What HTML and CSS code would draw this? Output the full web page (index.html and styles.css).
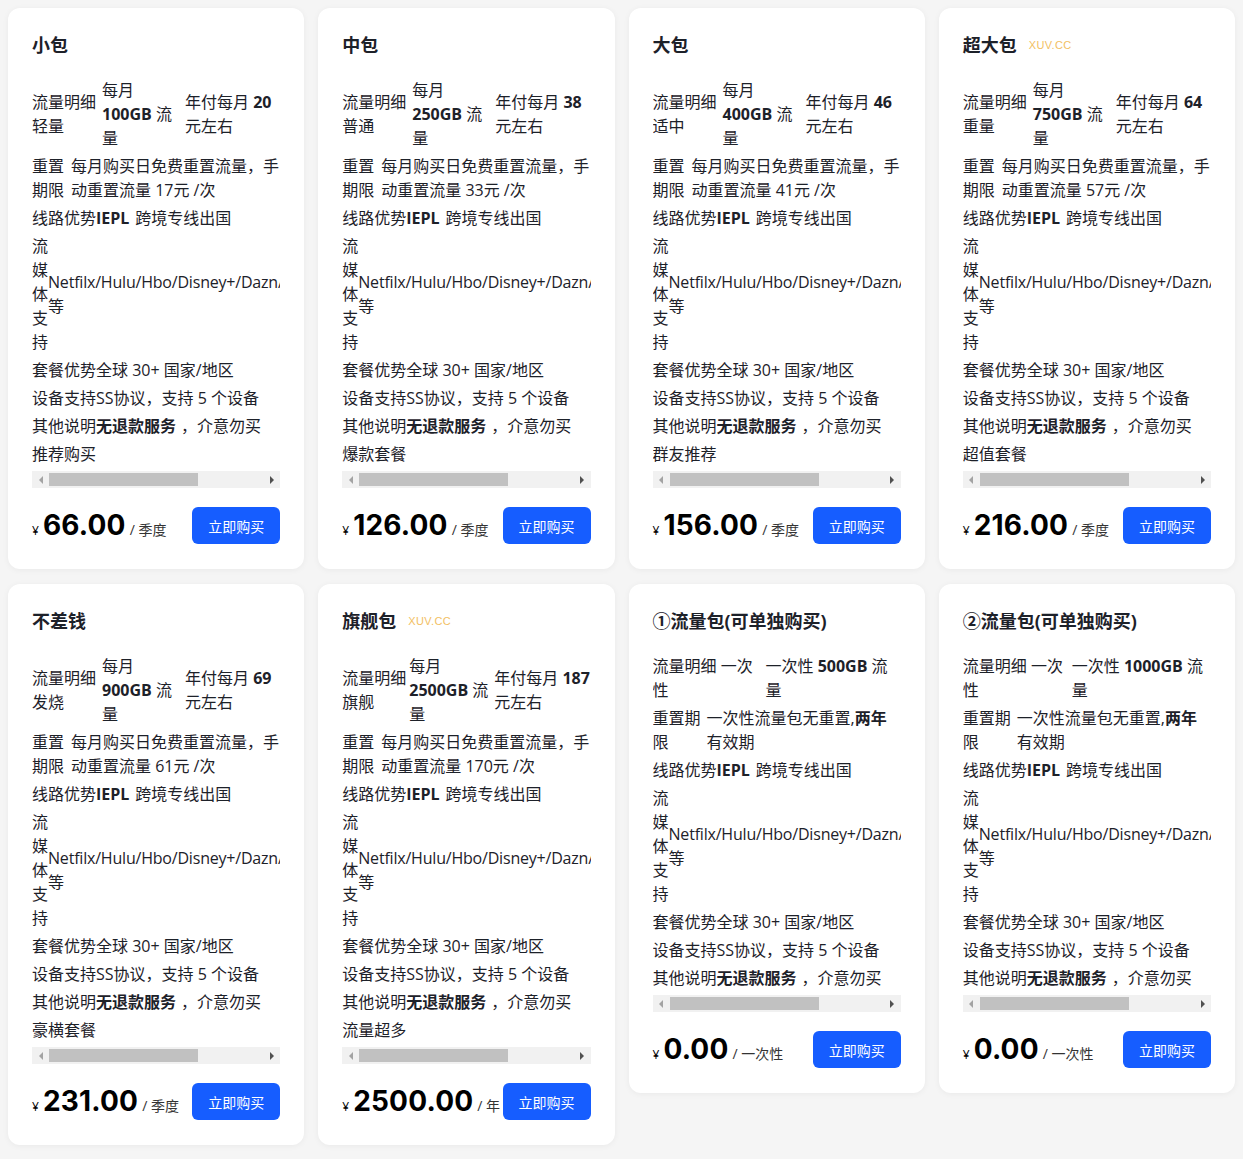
FILE: index.html
```html
<!DOCTYPE html>
<html lang="zh-CN">
<head>
<meta charset="utf-8">
<title>套餐</title>
<link rel="stylesheet" href="styles.css">
</head>
<body>
<div class="plans">

  <div class="card">
    <div class="card-head"><span class="card-title">小包</span></div>
    <div class="spec">
      <div class="row row-3">
        <div class="c-lab">流量明细 轻量</div>
        <div class="c-val">每月 <span class="nw"><b>100GB</b> 流</span>量</div>
        <div class="c-note"><span class="nw">年付每月 <b>20</b></span> 元左右</div>
      </div>
      <div class="row row-2">
        <div class="c-lab">重置期限</div>
        <div class="c-val">每月购买日免费重置流量，手动重置流量 17元 /次</div>
      </div>
      <div class="row">线路优势<b class="sp">IEPL</b>跨境专线出国</div>
      <div class="row row-stream">
        <div class="c-lab">流媒体支持</div>
        <div class="c-val"><span class="nw media">Netfilx/Hulu/Hbo/Disney+/Dazn/</span>等</div>
      </div>
      <div class="row">套餐优势全球 30+ 国家/地区</div>
      <div class="row">设备支持SS协议，支持 5 个设备</div>
      <div class="row">其他说明<b>无退款服务</b><span class="cm">，</span>介意勿买</div>
      <div class="row">推荐购买</div>
    </div>
    <div class="hscroll"><span class="sb-btn sb-left"></span><span class="sb-thumb"></span><span class="sb-btn sb-right"></span></div>
    <div class="buy">
      <div class="price"><span class="cur">¥</span><span class="amount">66.00</span><span class="unit">/ 季度</span></div>
      <button class="btn">立即购买</button>
    </div>
  </div>

  <div class="card">
    <div class="card-head"><span class="card-title">中包</span></div>
    <div class="spec">
      <div class="row row-3">
        <div class="c-lab">流量明细 普通</div>
        <div class="c-val">每月 <span class="nw"><b>250GB</b> 流</span>量</div>
        <div class="c-note"><span class="nw">年付每月 <b>38</b></span> 元左右</div>
      </div>
      <div class="row row-2">
        <div class="c-lab">重置期限</div>
        <div class="c-val">每月购买日免费重置流量，手动重置流量 33元 /次</div>
      </div>
      <div class="row">线路优势<b class="sp">IEPL</b>跨境专线出国</div>
      <div class="row row-stream">
        <div class="c-lab">流媒体支持</div>
        <div class="c-val"><span class="nw media">Netfilx/Hulu/Hbo/Disney+/Dazn/</span>等</div>
      </div>
      <div class="row">套餐优势全球 30+ 国家/地区</div>
      <div class="row">设备支持SS协议，支持 5 个设备</div>
      <div class="row">其他说明<b>无退款服务</b><span class="cm">，</span>介意勿买</div>
      <div class="row">爆款套餐</div>
    </div>
    <div class="hscroll"><span class="sb-btn sb-left"></span><span class="sb-thumb"></span><span class="sb-btn sb-right"></span></div>
    <div class="buy">
      <div class="price"><span class="cur">¥</span><span class="amount">126.00</span><span class="unit">/ 季度</span></div>
      <button class="btn">立即购买</button>
    </div>
  </div>

  <div class="card">
    <div class="card-head"><span class="card-title">大包</span></div>
    <div class="spec">
      <div class="row row-3">
        <div class="c-lab">流量明细 适中</div>
        <div class="c-val">每月 <span class="nw"><b>400GB</b> 流</span>量</div>
        <div class="c-note"><span class="nw">年付每月 <b>46</b></span> 元左右</div>
      </div>
      <div class="row row-2">
        <div class="c-lab">重置期限</div>
        <div class="c-val">每月购买日免费重置流量，手动重置流量 41元 /次</div>
      </div>
      <div class="row">线路优势<b class="sp">IEPL</b>跨境专线出国</div>
      <div class="row row-stream">
        <div class="c-lab">流媒体支持</div>
        <div class="c-val"><span class="nw media">Netfilx/Hulu/Hbo/Disney+/Dazn/</span>等</div>
      </div>
      <div class="row">套餐优势全球 30+ 国家/地区</div>
      <div class="row">设备支持SS协议，支持 5 个设备</div>
      <div class="row">其他说明<b>无退款服务</b><span class="cm">，</span>介意勿买</div>
      <div class="row">群友推荐</div>
    </div>
    <div class="hscroll"><span class="sb-btn sb-left"></span><span class="sb-thumb"></span><span class="sb-btn sb-right"></span></div>
    <div class="buy">
      <div class="price"><span class="cur">¥</span><span class="amount">156.00</span><span class="unit">/ 季度</span></div>
      <button class="btn">立即购买</button>
    </div>
  </div>

  <div class="card">
    <div class="card-head"><span class="card-title">超大包</span><span class="tag">xuv.cc</span></div>
    <div class="spec">
      <div class="row row-3">
        <div class="c-lab">流量明细 重量</div>
        <div class="c-val">每月 <span class="nw"><b>750GB</b> 流</span>量</div>
        <div class="c-note"><span class="nw">年付每月 <b>64</b></span> 元左右</div>
      </div>
      <div class="row row-2">
        <div class="c-lab">重置期限</div>
        <div class="c-val">每月购买日免费重置流量，手动重置流量 57元 /次</div>
      </div>
      <div class="row">线路优势<b class="sp">IEPL</b>跨境专线出国</div>
      <div class="row row-stream">
        <div class="c-lab">流媒体支持</div>
        <div class="c-val"><span class="nw media">Netfilx/Hulu/Hbo/Disney+/Dazn/</span>等</div>
      </div>
      <div class="row">套餐优势全球 30+ 国家/地区</div>
      <div class="row">设备支持SS协议，支持 5 个设备</div>
      <div class="row">其他说明<b>无退款服务</b><span class="cm">，</span>介意勿买</div>
      <div class="row">超值套餐</div>
    </div>
    <div class="hscroll"><span class="sb-btn sb-left"></span><span class="sb-thumb"></span><span class="sb-btn sb-right"></span></div>
    <div class="buy">
      <div class="price"><span class="cur">¥</span><span class="amount">216.00</span><span class="unit">/ 季度</span></div>
      <button class="btn">立即购买</button>
    </div>
  </div>

  <div class="card">
    <div class="card-head"><span class="card-title">不差钱</span></div>
    <div class="spec">
      <div class="row row-3">
        <div class="c-lab">流量明细 发烧</div>
        <div class="c-val">每月 <span class="nw"><b>900GB</b> 流</span>量</div>
        <div class="c-note"><span class="nw">年付每月 <b>69</b></span> 元左右</div>
      </div>
      <div class="row row-2">
        <div class="c-lab">重置期限</div>
        <div class="c-val">每月购买日免费重置流量，手动重置流量 61元 /次</div>
      </div>
      <div class="row">线路优势<b class="sp">IEPL</b>跨境专线出国</div>
      <div class="row row-stream">
        <div class="c-lab">流媒体支持</div>
        <div class="c-val"><span class="nw media">Netfilx/Hulu/Hbo/Disney+/Dazn/</span>等</div>
      </div>
      <div class="row">套餐优势全球 30+ 国家/地区</div>
      <div class="row">设备支持SS协议，支持 5 个设备</div>
      <div class="row">其他说明<b>无退款服务</b><span class="cm">，</span>介意勿买</div>
      <div class="row">豪横套餐</div>
    </div>
    <div class="hscroll"><span class="sb-btn sb-left"></span><span class="sb-thumb"></span><span class="sb-btn sb-right"></span></div>
    <div class="buy">
      <div class="price"><span class="cur">¥</span><span class="amount">231.00</span><span class="unit">/ 季度</span></div>
      <button class="btn">立即购买</button>
    </div>
  </div>

  <div class="card">
    <div class="card-head"><span class="card-title">旗舰包</span><span class="tag">xuv.cc</span></div>
    <div class="spec">
      <div class="row row-3 row-wide">
        <div class="c-lab">流量明细 旗舰</div>
        <div class="c-val">每月 <span class="nw"><b>2500GB</b> 流</span>量</div>
        <div class="c-note"><span class="nw">年付每月 <b>187</b></span> 元左右</div>
      </div>
      <div class="row row-2">
        <div class="c-lab">重置期限</div>
        <div class="c-val">每月购买日免费重置流量，手动重置流量 170元 /次</div>
      </div>
      <div class="row">线路优势<b class="sp">IEPL</b>跨境专线出国</div>
      <div class="row row-stream">
        <div class="c-lab">流媒体支持</div>
        <div class="c-val"><span class="nw media">Netfilx/Hulu/Hbo/Disney+/Dazn/</span>等</div>
      </div>
      <div class="row">套餐优势全球 30+ 国家/地区</div>
      <div class="row">设备支持SS协议，支持 5 个设备</div>
      <div class="row">其他说明<b>无退款服务</b><span class="cm">，</span>介意勿买</div>
      <div class="row">流量超多</div>
    </div>
    <div class="hscroll"><span class="sb-btn sb-left"></span><span class="sb-thumb"></span><span class="sb-btn sb-right"></span></div>
    <div class="buy">
      <div class="price"><span class="cur">¥</span><span class="amount">2500.00</span><span class="unit">/ 年</span></div>
      <button class="btn">立即购买</button>
    </div>
  </div>

  <div class="card">
    <div class="card-head"><span class="card-title">①流量包(可单独购买)</span></div>
    <div class="spec">
      <div class="row row-once">
        <div class="c-lab">流量明细 一次性</div>
        <div class="c-val"><span class="nw">一次性 <b>500GB</b> 流</span>量</div>
      </div>
      <div class="row row-once2">
        <div class="c-lab">重置期限</div>
        <div class="c-val"><span class="nw">一次性流量包无重置,<b>两年</b></span>有效期</div>
      </div>
      <div class="row">线路优势<b class="sp">IEPL</b>跨境专线出国</div>
      <div class="row row-stream">
        <div class="c-lab">流媒体支持</div>
        <div class="c-val"><span class="nw media">Netfilx/Hulu/Hbo/Disney+/Dazn/</span>等</div>
      </div>
      <div class="row">套餐优势全球 30+ 国家/地区</div>
      <div class="row">设备支持SS协议，支持 5 个设备</div>
      <div class="row">其他说明<b>无退款服务</b><span class="cm">，</span>介意勿买</div>
    </div>
    <div class="hscroll"><span class="sb-btn sb-left"></span><span class="sb-thumb"></span><span class="sb-btn sb-right"></span></div>
    <div class="buy">
      <div class="price"><span class="cur">¥</span><span class="amount">0.00</span><span class="unit">/ 一次性</span></div>
      <button class="btn">立即购买</button>
    </div>
  </div>

  <div class="card">
    <div class="card-head"><span class="card-title">②流量包(可单独购买)</span></div>
    <div class="spec">
      <div class="row row-once row-once-b">
        <div class="c-lab">流量明细 一次性</div>
        <div class="c-val"><span class="nw">一次性 <b>1000GB</b> 流</span>量</div>
      </div>
      <div class="row row-once2">
        <div class="c-lab">重置期限</div>
        <div class="c-val"><span class="nw">一次性流量包无重置,<b>两年</b></span>有效期</div>
      </div>
      <div class="row">线路优势<b class="sp">IEPL</b>跨境专线出国</div>
      <div class="row row-stream">
        <div class="c-lab">流媒体支持</div>
        <div class="c-val"><span class="nw media">Netfilx/Hulu/Hbo/Disney+/Dazn/</span>等</div>
      </div>
      <div class="row">套餐优势全球 30+ 国家/地区</div>
      <div class="row">设备支持SS协议，支持 5 个设备</div>
      <div class="row">其他说明<b>无退款服务</b><span class="cm">，</span>介意勿买</div>
    </div>
    <div class="hscroll"><span class="sb-btn sb-left"></span><span class="sb-thumb"></span><span class="sb-btn sb-right"></span></div>
    <div class="buy">
      <div class="price"><span class="cur">¥</span><span class="amount">0.00</span><span class="unit">/ 一次性</span></div>
      <button class="btn">立即购买</button>
    </div>
  </div>

</div>
</body>
</html>
```

FILE: styles.css
```css
* {
  box-sizing: border-box;
}

html,
body {
  margin: 0;
  padding: 0;
}

body {
  background: #f5f5f5;
  font-family: "Open Sans", "Noto Sans CJK SC", sans-serif;
  font-size: 16px;
  line-height: 24px;
  color: #1d2129;
}

b {
  font-weight: 700;
}

.plans {
  display: grid;
  grid-template-columns: repeat(4, minmax(0, 1fr));
  column-gap: 14px;
  row-gap: 15px;
  padding: 8px;
  align-items: start;
}

.card {
  background: #fff;
  border-radius: 12px;
  padding: 24px 24px 25px;
  box-shadow: 0 1px 6px rgba(0, 0, 0, 0.05);
  min-width: 0;
}

.card-head {
  display: flex;
  align-items: center;
  height: 26px;
  margin-bottom: 20px;
}

.card-title {
  font-size: 18px;
  font-weight: 700;
  line-height: 26px;
  color: #1d2129;
}

.tag {
  margin-left: 12px;
  font-family: "Liberation Sans", Arial, sans-serif;
  font-size: 11px;
  line-height: 14px;
  letter-spacing: 0.4px;
  text-transform: uppercase;
  color: #f2c063;
}

.spec {
  overflow: hidden;
}

.row {
  display: flex;
  align-items: center;
  margin-bottom: 4px;
  min-width: 0;
}

.nw {
  white-space: nowrap;
}

.sp {
  margin-right: 6px;
}

.cm {
  margin: 0 0 0 5px;
}

.media {
  letter-spacing: -0.2px;
}

/* three column row: label / monthly traffic / yearly note */
.row-3 .c-lab {
  flex: 0 0 65px;
}

.row-3 .c-val {
  flex: 0 0 76px;
  margin-left: 5px;
}

.row-3 .c-note {
  flex: 1 1 auto;
  min-width: 0;
  margin-left: 7px;
}

.row-wide .c-val {
  flex-basis: 80px;
  margin-left: 2px;
}

.row-wide .c-note {
  margin-left: 5px;
}

/* two column row: reset period */
.row-2 .c-lab {
  flex: 0 0 32px;
}

.row-2 .c-val {
  flex: 1 1 auto;
  min-width: 0;
  margin-left: 7px;
}

/* streaming row */
.row-stream .c-lab {
  flex: 0 0 16px;
}

.row-stream .c-val {
  flex: 1 1 auto;
  min-width: 0;
}

/* one-time pack rows */
.row-once .c-lab {
  flex: 0 0 104px;
}

.row-once .c-val {
  flex: 1 1 auto;
  min-width: 0;
  margin-left: 9px;
}

.row-once-b .c-val {
  margin-left: 5px;
}

.row-once2 .c-lab {
  flex: 0 0 48px;
}

.row-once2 .c-val {
  flex: 1 1 auto;
  min-width: 0;
  margin-left: 6px;
}

/* horizontal scrollbar */
.hscroll {
  display: flex;
  align-items: center;
  height: 17px;
  margin-top: 1px;
  background: #f1f1f1;
}

.sb-btn {
  flex: 0 0 17px;
  height: 17px;
  display: flex;
  align-items: center;
  justify-content: center;
}

.sb-btn::before {
  content: "";
  width: 0;
  height: 0;
  border-top: 4px solid transparent;
  border-bottom: 4px solid transparent;
}

.sb-left::before {
  border-right: 4px solid #a3a3a3;
}

.sb-right {
  margin-left: auto;
}

.sb-right::before {
  border-left: 4px solid #505050;
}

.sb-thumb {
  flex: 0 0 149px;
  height: 13px;
  background: #c1c1c1;
}

/* price + button */
.buy {
  display: flex;
  align-items: center;
  justify-content: space-between;
  margin-top: 19px;
}

.price {
  display: flex;
  align-items: baseline;
  white-space: nowrap;
  color: #000;
}

.cur {
  font-size: 12px;
  margin-right: 4px;
}

.amount {
  font-family: Inter, "Open Sans", sans-serif;
  font-weight: 700;
  font-size: 28px;
  line-height: 34px;
  letter-spacing: 0.2px;
}

.unit {
  font-size: 14px;
  margin-left: 4px;
  color: #333;
}

.btn {
  flex: 0 0 88px;
  width: 88px;
  height: 37px;
  border: 0;
  border-radius: 6px;
  background: #165dff;
  color: #fff;
  font-family: "Open Sans", "Noto Sans CJK SC", sans-serif;
  font-size: 14px;
  padding: 0;
}
```
